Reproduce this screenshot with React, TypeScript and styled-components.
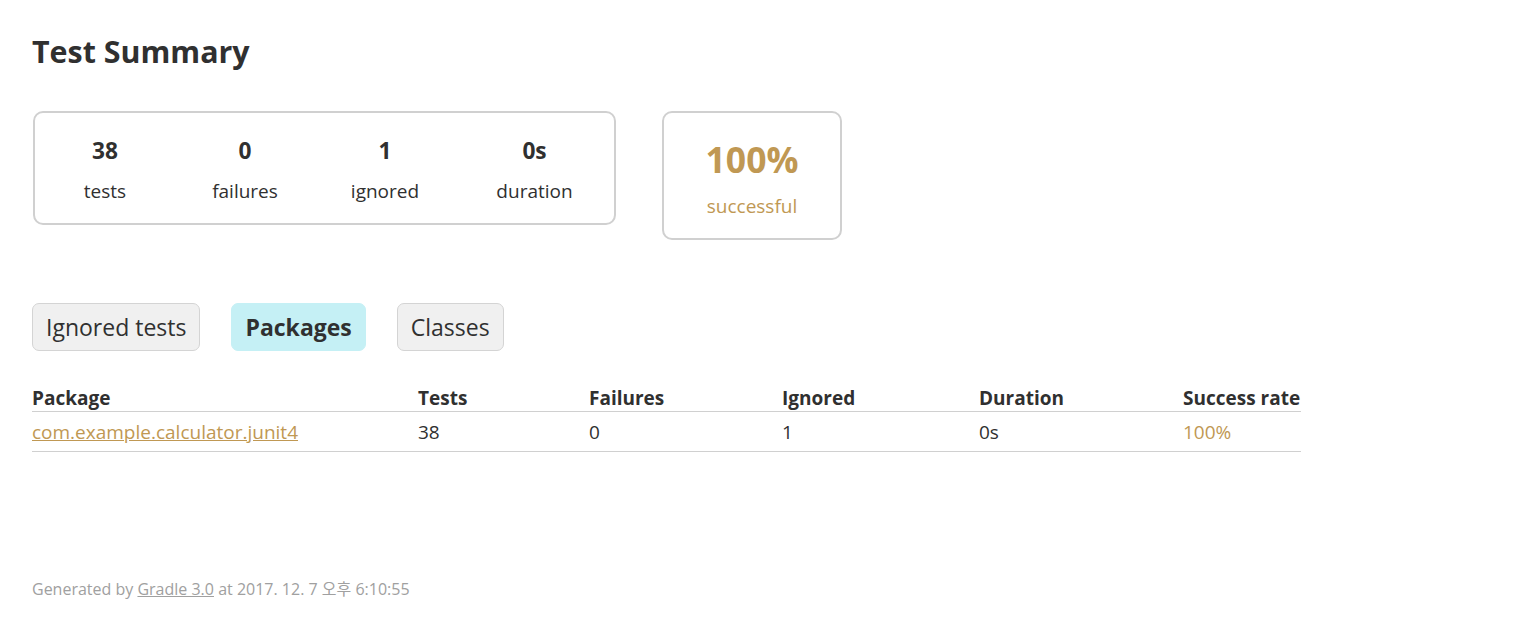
import styled, { createGlobalStyle } from "styled-components";

const GlobalStyle = createGlobalStyle`
  body {
    margin: 0;
    padding: 0;
    background: #fff;
    color: #303030;
    font-family: "Open Sans", "Noto Sans CJK KR", sans-serif;
    font-size: 19px;
  }
`;

const Content = styled.div`
  padding: 32px 32px 30px;
`;

const Title = styled.h1`
  margin: 0;
  font-size: 30.4px;
  line-height: 40px;
  font-weight: bold;
`;

const Summary = styled.div`
  display: flex;
  align-items: flex-start;
  margin-top: 39px;
`;

const SummaryGroup = styled.div`
  display: flex;
  margin-left: 1px;
  border: solid 2px #d0d0d0;
  border-radius: 10px;
`;

const InfoBox = styled.div<{ $wide?: boolean }>`
  width: ${(p) => (p.$wide ? "159px" : "140px")};
  padding: 24px 0 20px;
  text-align: center;
`;

const Counter = styled.div`
  font-size: 22.7px;
  line-height: 28px;
  font-weight: bold;
  margin-bottom: 14px;
`;

const Label = styled.div`
  font-size: 19px;
  line-height: 24px;
`;

const SuccessRate = styled.div`
  width: 176px;
  margin-left: 46px;
  padding: 25px 0 20px;
  border: solid 2px #d0d0d0;
  border-radius: 10px;
  text-align: center;
  color: #c09853;
`;

const Percent = styled.div`
  font-size: 35.5px;
  line-height: 42px;
  font-weight: bold;
  margin-bottom: 14px;
`;

const Tabs = styled.ul`
  display: flex;
  gap: 31px;
  margin: 63px 0 0;
  padding: 0;
  list-style: none;
`;

const Tab = styled.li<{ $selected?: boolean }>`
  height: 46px;
  padding: 0 13px;
  border: solid 1px ${(p) => (p.$selected ? "#c5f0f5" : "#d4d4d4")};
  border-radius: 7px;
  background: ${(p) => (p.$selected ? "#c5f0f5" : "#f0f0f0")};
  font-size: 23px;
  line-height: 46px;
  font-weight: ${(p) => (p.$selected ? "bold" : "normal")};
`;

const Table = styled.table`
  margin-top: 35px;
  border-collapse: collapse;
  table-layout: fixed;
  width: 1269px;
`;

const Th = styled.th`
  text-align: left;
  padding: 0;
  line-height: 25px;
  font-weight: bold;
  border-bottom: solid 1px #d0d0d0;
`;

const Td = styled.td<{ $skipped?: boolean }>`
  padding: 8px 0 7px;
  line-height: 24px;
  border-bottom: solid 1px #d0d0d0;
  color: ${(p) => (p.$skipped ? "#c09853" : "#303030")};
`;

const PkgLink = styled.a`
  color: #c09853;
  text-decoration: underline;
`;

const Footer = styled.div`
  margin-top: 127px;
  font-size: 16px;
  line-height: 20px;
  color: #a0a0a0;
  white-space: nowrap;

  a {
    color: #a0a0a0;
    text-decoration: underline;
  }
`;

const counters = [
  { value: "38", label: "tests" },
  { value: "0", label: "failures" },
  { value: "1", label: "ignored" },
  { value: "0s", label: "duration", wide: true },
];

const columns = [
  { name: "Package", width: 386 },
  { name: "Tests", width: 171 },
  { name: "Failures", width: 193 },
  { name: "Ignored", width: 197 },
  { name: "Duration", width: 204 },
  { name: "Success rate", width: 118 },
];

export default function App() {
  return (
    <>
      <GlobalStyle />
      <Content>
        <Title>Test Summary</Title>
        <Summary>
          <SummaryGroup>
            {counters.map((c) => (
              <InfoBox key={c.label} $wide={c.wide}>
                <Counter>{c.value}</Counter>
                <Label>{c.label}</Label>
              </InfoBox>
            ))}
          </SummaryGroup>
          <SuccessRate>
            <Percent>100%</Percent>
            <Label>successful</Label>
          </SuccessRate>
        </Summary>

        <Tabs>
          <Tab>Ignored tests</Tab>
          <Tab $selected>Packages</Tab>
          <Tab>Classes</Tab>
        </Tabs>

        <Table>
          <colgroup>
            {columns.map((c) => (
              <col key={c.name} style={{ width: c.width }} />
            ))}
          </colgroup>
          <thead>
            <tr>
              {columns.map((c) => (
                <Th key={c.name}>{c.name}</Th>
              ))}
            </tr>
          </thead>
          <tbody>
            <tr>
              <Td>
                <PkgLink href="#">com.example.calculator.junit4</PkgLink>
              </Td>
              <Td>38</Td>
              <Td>0</Td>
              <Td>1</Td>
              <Td>0s</Td>
              <Td $skipped>100%</Td>
            </tr>
          </tbody>
        </Table>

        <Footer>
          Generated by <a href="#">Gradle 3.0</a> at 2017. 12. 7 오후 6:10:55
        </Footer>
      </Content>
    </>
  );
}
